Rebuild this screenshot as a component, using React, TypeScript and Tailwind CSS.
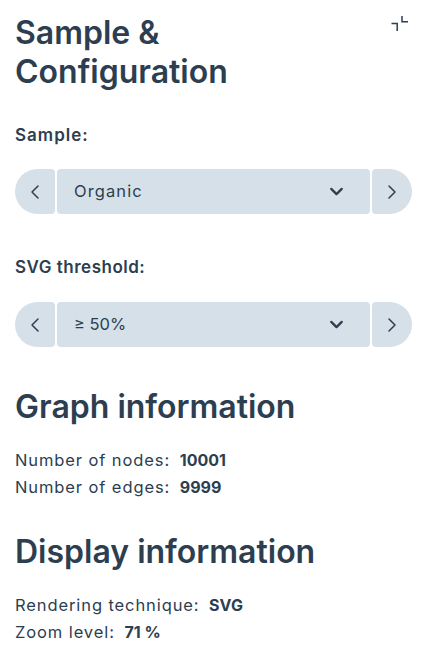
import { ChevronDown, ChevronLeft, ChevronRight } from "lucide-react";

const font = { fontFamily: "Inter, sans-serif" };

function Stepper({ value, wide }: { value: string; wide?: boolean }) {
  return (
    <div className="flex h-[45px] gap-[2px]">
      <button className="flex w-[40px] items-center justify-center rounded-l-[23px] rounded-r-[4px] bg-[#d6e0e9]">
        <ChevronLeft size={24} strokeWidth={1.5} className="text-[#2c3e50]" />
      </button>
      <div className="flex flex-1 items-center justify-between rounded-[4px] bg-[#d6e0e9] pl-[17px] pr-[23px]">
        <span className={wide ? "text-[16.5px] tracking-[1.1px] text-[#2c3e50]" : "text-[16.5px] text-[#2c3e50]"}>{value}</span>
        <ChevronDown size={21} strokeWidth={2.6} className="text-[#2c3e50]" />
      </div>
      <button className="flex w-[40px] items-center justify-center rounded-l-[4px] rounded-r-[23px] bg-[#d6e0e9]">
        <ChevronRight size={24} strokeWidth={1.5} className="text-[#2c3e50]" />
      </button>
    </div>
  );
}

function Info({ label, value }: { label: string; value: string }) {
  return (
    <div className="h-[27px] text-[16.5px] leading-[27px] text-[#2c3e50]">
      <span className="tracking-[0.9px]">{label}:</span> <span className="ml-[5px] text-[16px] font-bold">{value}</span>
    </div>
  );
}

export default function App() {
  return (
    <div style={font} className="relative h-[667px] w-[425px] overflow-hidden bg-white pl-[15px] pr-[13px] text-[#2c3e50]">
      <button className="absolute right-[16px] top-[15px]">
        <svg width="18" height="18" viewBox="0 0 18 18" fill="none" stroke="#2c3e50" strokeWidth="1.5">
          <path d="M0.5 8.5H6.2V16" />
          <path d="M11 1V6.8H17" />
        </svg>
      </button>
      <h1 className="pt-[13px] text-[32px] font-semibold leading-[39px]">
        Sample &amp;
        <br />
        Configuration
      </h1>
      <div className="mt-[32px] text-[17px] font-semibold leading-[24px] tracking-[1px]">Sample:</div>
      <div className="mt-[22px]">
        <Stepper value="Organic" wide />
      </div>
      <div className="mt-[41px] text-[17px] font-semibold leading-[24px] tracking-[0.5px]">SVG threshold:</div>
      <div className="mt-[23px]">
        <Stepper value="≥ 50%" />
      </div>
      <h2 className="mt-[40px] text-[32px] font-semibold leading-[40px]">Graph information</h2>
      <div className="mt-[20px]">
        <Info label="Number of nodes" value="10001" />
        <Info label="Number of edges" value="9999" />
      </div>
      <h2 className="mt-[31px] text-[32px] font-semibold leading-[40px]">Display information</h2>
      <div className="mt-[20px]">
        <Info label="Rendering technique" value="SVG" />
        <Info label="Zoom level" value="71 %" />
      </div>
    </div>
  );
}
